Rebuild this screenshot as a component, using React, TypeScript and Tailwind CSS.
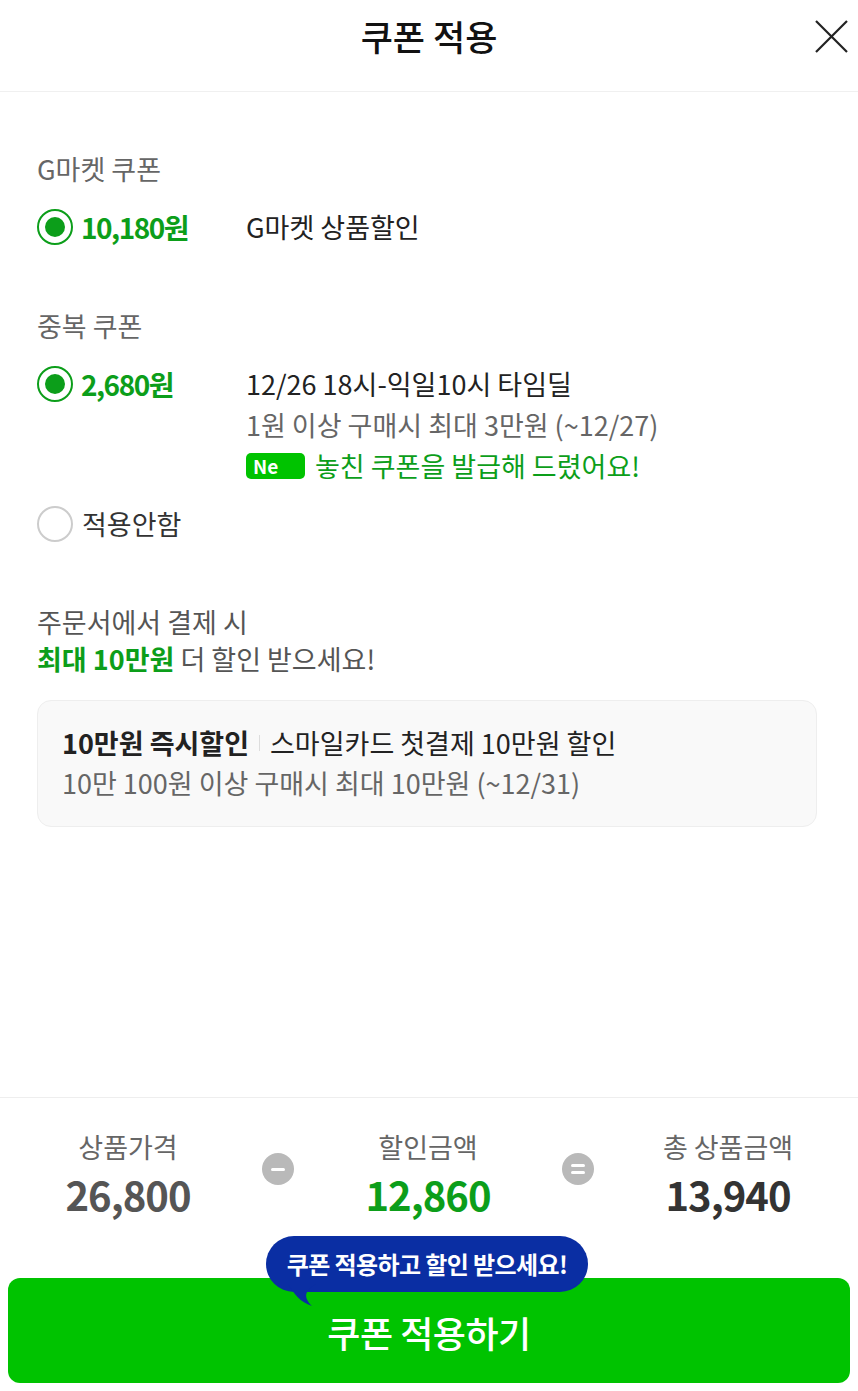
const FONT = "font-['Noto_Sans_CJK_KR','Noto_Sans',sans-serif]";

function Radio({ checked }: { checked: boolean }) {
  return (
    <span
      className={
        checked
          ? "flex h-[36px] w-[36px] shrink-0 items-center justify-center rounded-full border-2 border-[#0c9e1a]"
          : "flex h-[36px] w-[36px] shrink-0 items-center justify-center rounded-full border-2 border-[#cccccc]"
      }
    >
      {checked && <span className="h-[20px] w-[20px] rounded-full bg-[#0c9e1a]" />}
    </span>
  );
}

function Operator({ symbol }: { symbol: "minus" | "equal" }) {
  return (
    <span className="mx-[34px] mt-[-10px] flex h-[32px] w-[32px] shrink-0 items-center justify-center rounded-full bg-[#b9b9b9]">
      {symbol === "minus" ? (
        <span className="h-[3px] w-[14px] rounded bg-white" />
      ) : (
        <span className="flex flex-col gap-[4px]">
          <span className="h-[3px] w-[14px] rounded bg-white" />
          <span className="h-[3px] w-[14px] rounded bg-white" />
        </span>
      )}
    </span>
  );
}

function Summary({ label, value, tone }: { label: string; value: string; tone: string }) {
  return (
    <div className="flex w-[200px] shrink-0 flex-col items-center">
      <span className="text-[27px] leading-[32px] text-[#666]">{label}</span>
      <span className={`mt-[8px] text-[40px] font-bold leading-[46px] tracking-[-1px] ${tone}`}>
        {value}
      </span>
    </div>
  );
}

export default function App() {
  return (
    <div className={`flex h-[1391px] w-[858px] flex-col bg-white ${FONT}`}>
      {/* header */}
      <header className="relative flex h-[92px] shrink-0 justify-center border-b border-[#f0f0f0] pt-[12px]">
        <h1 className="text-[35px] font-medium leading-[48px] text-[#111]">쿠폰 적용</h1>
        <button className="absolute right-[9px] top-[19px] text-[#222]">
          <svg width="35" height="35" viewBox="0 0 35 35" fill="none" stroke="currentColor" strokeWidth="2.2">
            <path d="M2 2 L33 33 M33 2 L2 33" />
          </svg>
        </button>
      </header>

      <main className="flex-1 pl-[37px] pr-[41px] pt-[59px]">
        <section>
          <h2 className="text-[27px] leading-[36px] text-[#666]">G마켓 쿠폰</h2>
          <div className="mt-[19px] flex items-center">
            <Radio checked />
            <span className="ml-[8px] w-[165px] text-[28px] font-bold tracking-[-1.5px] text-[#0c9e1a]">
              10,180원
            </span>
            <span className="text-[27px] text-[#222]">G마켓 상품할인</span>
          </div>
        </section>

        <section className="mt-[60px]">
          <h2 className="text-[27px] leading-[36px] text-[#666]">중복 쿠폰</h2>
          <div className="mt-[22px] flex items-start">
            <Radio checked />
            <span className="ml-[8px] w-[165px] text-[28px] font-bold leading-[36px] tracking-[-1.5px] text-[#0c9e1a]">
              2,680원
            </span>
            <div className="flex flex-col text-[27px] leading-[41px]">
              <span className="-mt-[3px] text-[#222]">12/26 18시-익일10시 타임딜</span>
              <span className="text-[#666]">1원 이상 구매시 최대 3만원 (~12/27)</span>
              <span className="flex items-center text-[#0c9e1a]">
                <span className="mr-[10px] flex h-[26px] w-[59px] items-center rounded-[5px] bg-[#00c300] pl-[7px] text-[19px] font-bold text-white">
                  Ne
                </span>
                놓친 쿠폰을 발급해 드렸어요!
              </span>
            </div>
          </div>
          <div className="mt-[18px] flex items-center">
            <Radio checked={false} />
            <span className="ml-[9px] text-[27px] text-[#333]">적용안함</span>
          </div>
        </section>

        <section className="mt-[58px]">
          <p className="text-[27px] leading-[37px] text-[#555]">
            <span className="block">주문서에서 결제 시</span>
            <span className="block">
              <span className="font-bold text-[#0c9e1a]">최대 10만원</span> 더 할인 받으세요!
            </span>
          </p>
          <div className="mt-[23px] rounded-[14px] border border-[#eeeeee] bg-[#f9f9f9] px-[24px] pb-[24px] pt-[23px]">
            <div className="flex items-center text-[27px] leading-[38px] text-[#222]">
              <span className="font-bold">10만원 즉시할인</span>
              <span className="mx-[10px] h-[16px] w-px bg-[#dddddd]" />
              <span>스마일카드 첫결제 10만원 할인</span>
            </div>
            <div className="mt-[2px] text-[27px] leading-[38px] text-[#666]">
              10만 100원 이상 구매시 최대 10만원 (~12/31)
            </div>
          </div>
        </section>
      </main>

      {/* footer summary */}
      <footer className="shrink-0 border-t border-[#eeeeee] pb-[8px] pt-[33px]">
        <div className="flex items-center pl-[28px]">
          <Summary label="상품가격" value="26,800" tone="text-[#555]" />
          <Operator symbol="minus" />
          <Summary label="할인금액" value="12,860" tone="text-[#0c9e1a]" />
          <Operator symbol="equal" />
          <Summary label="총 상품금액" value="13,940" tone="text-[#333]" />
        </div>
        <div className="relative mt-[61px] px-[8px]">
          <button className="flex h-[105px] w-full items-center justify-center rounded-[12px] bg-[#00c300] pt-[2px] text-[36px] font-medium tracking-[-0.5px] text-white">
            쿠폰 적용하기
          </button>
          <div className="absolute left-[266px] top-[-42px]">
            <div className="flex h-[56px] w-[322px] items-center justify-center rounded-full bg-[#0a2ea3] text-[24px] font-bold tracking-[-0.6px] text-white">
              쿠폰 적용하고 할인 받으세요!
            </div>
            <svg
              className="absolute left-[22px] top-[48px]"
              width="28"
              height="24"
              viewBox="0 0 28 24"
            >
              <path d="M0 0 L28 0 C18 6 14 12 24 22 C12 18 6 10 0 0 Z" fill="#0a2ea3" />
            </svg>
          </div>
        </div>
      </footer>
    </div>
  );
}
